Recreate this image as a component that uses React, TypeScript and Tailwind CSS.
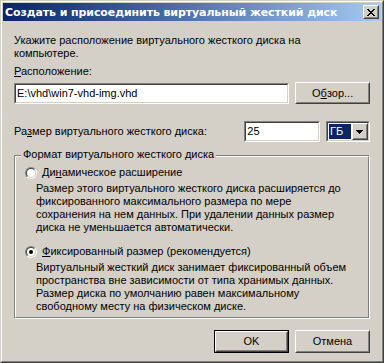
import React from "react";

const face = "bg-[#D4D0C8]";

function Sunken({ className = "", children }: { className?: string; children?: React.ReactNode }) {
  return (
    <div className={`border border-t-[#808080] border-l-[#808080] border-r-white border-b-white ${className}`}>
      <div className="h-full w-full border border-t-[#404040] border-l-[#404040] border-r-[#D4D0C8] border-b-[#D4D0C8] bg-white">
        {children}
      </div>
    </div>
  );
}

function Button({ children, className = "", isDefault = false }: { children: React.ReactNode; className?: string; isDefault?: boolean }) {
  const inner = (
    <div className="h-full w-full border border-t-white border-l-white border-r-[#404040] border-b-[#404040]">
      <div className={`h-full w-full border border-t-[#D4D0C8] border-l-[#D4D0C8] border-r-[#808080] border-b-[#808080] ${face} flex items-center justify-center`}>
        {children}
      </div>
    </div>
  );
  if (isDefault) return <div className={`border border-black ${className}`}>{inner}</div>;
  return <div className={className}>{inner}</div>;
}

function Radio({ checked }: { checked?: boolean }) {
  return (
    <div className="w-[12px] h-[12px] rounded-full border border-t-[#808080] border-l-[#808080] border-r-white border-b-white shrink-0">
      <div className="w-full h-full rounded-full border border-t-[#404040] border-l-[#404040] border-r-[#D4D0C8] border-b-[#D4D0C8] bg-white flex items-center justify-center">
        {checked && <div className="w-[4px] h-[4px] rounded-full bg-black" />}
      </div>
    </div>
  );
}

export default function App() {
  return (
    <div
      className="w-[384px] h-[363px] border border-t-[#D4D0C8] border-l-[#D4D0C8] border-r-[#404040] border-b-[#404040] text-[11px] leading-[13px] text-black"
      style={{ fontFamily: '"Liberation Sans", Arial, sans-serif' }}
    >
      <div className="h-full border border-t-white border-l-white border-r-[#808080] border-b-[#808080]">
        <div className={`h-full p-px ${face} flex flex-col`}>
          {/* Title bar */}
          <div className="h-[18px] bg-linear-to-r from-[#0A246A] to-[#A6CAF0] flex items-center pl-[2px] pr-[2px]">
            <span className="text-white font-bold text-[11px] flex-1 font-['DejaVu_Sans',sans-serif] tracking-[-0.1px]">
              Создать и присоединить виртуальный жесткий диск
            </span>
            <Button className="w-[16px] h-[14px]">
              <svg width="8" height="7" viewBox="0 0 8 7" shapeRendering="crispEdges">
                <path d="M0 0h2v1h-2zM6 0h2v1h-2zM1 1h2v1h-2zM5 1h2v1h-2zM2 2h4v1h-4zM3 3h2v1h-2zM2 4h4v1h-4zM1 5h2v1h-2zM5 5h2v1h-2zM0 6h2v1h-2zM6 6h2v1h-2z" fill="#000" />
              </svg>
            </Button>
          </div>

          {/* Body */}
          <div className="px-[11px] flex flex-col">
            <p className="mt-[13px]">
              Укажите расположение виртуального жесткого диска на
              <br />
              компьютере.
            </p>
            <p className="mt-[5px]">
              <u>Р</u>асположение:
            </p>
            <div className="mt-[5px] flex items-start">
              <Sunken className="w-[276px] h-[21px]">
                <div className="pl-[1px] pt-[2px]">E:\vhd\win7-vhd-img.vhd</div>
              </Sunken>
              <Button className="ml-[6px] w-[75px] h-[22px] -mt-px">
                О<u>б</u>зор...
              </Button>
            </div>

            <div className="mt-[17px] flex items-center h-[21px]">
              <span className="w-[231px]">
                Ра<u>з</u>мер виртуального жесткого диска:
              </span>
              <Sunken className="w-[76px] h-[21px]">
                <div className="pl-[1px] pt-[2px]">25</div>
              </Sunken>
              <Sunken className="ml-[6px] w-[44px] h-[21px]">
                <div className="flex h-full">
                  <div className="flex-1 m-px bg-[#0A246A] text-white pl-[1px] pt-px">ГБ</div>
                  <Button className="w-[16px] h-full">
                    <svg width="7" height="4" viewBox="0 0 7 4" shapeRendering="crispEdges">
                      <path d="M0 0h7v1h-7zM1 1h5v1h-5zM2 2h3v1h-3zM3 3h1v1h-1z" fill="#000" />
                    </svg>
                  </Button>
                </div>
              </Sunken>
            </div>

            {/* Group box */}
            <div className="relative mt-[13px] h-[164px] border border-t-[#808080] border-l-[#808080] border-r-white border-b-white">
              <div className="h-full border border-t-white border-l-white border-r-[#808080] border-b-[#808080] pl-[9px] pr-[8px] pt-[9px]">
                <div className="flex items-center gap-[5px]">
                  <Radio />
                  <span>
                    Ди<u>н</u>амическое расширение
                  </span>
                </div>
                <p className="mt-[3px] pl-[11px]">
                  Размер этого виртуального жесткого диска расширяется до
                  <br />
                  фиксированного максимального размера по мере
                  <br />
                  сохранения на нем данных. При удалении данных размер
                  <br />
                  диска не уменьшается автоматически.
                </p>
                <div className="mt-[11px] flex items-center gap-[5px]">
                  <Radio checked />
                  <span>
                    <u>Ф</u>иксированный размер (рекомендуется)
                  </span>
                </div>
                <p className="mt-[3px] pl-[11px]">
                  Виртуальный жесткий диск занимает фиксированный объем
                  <br />
                  пространства вне зависимости от типа хранимых данных.
                  <br />
                  Размер диска по умолчанию равен максимальному
                  <br />
                  свободному месту на физическом диске.
                </p>
              </div>
              <span className={`absolute -top-[8px] left-[6px] px-[2px] ${face}`}>Формат виртуального жесткого диска</span>
            </div>

            <div className="mt-[11px] flex justify-end gap-[6px]">
              <Button isDefault className="w-[75px] h-[23px]">
                OK
              </Button>
              <Button className="w-[75px] h-[23px]">Отмена</Button>
            </div>
          </div>
        </div>
      </div>
    </div>
  );
}
